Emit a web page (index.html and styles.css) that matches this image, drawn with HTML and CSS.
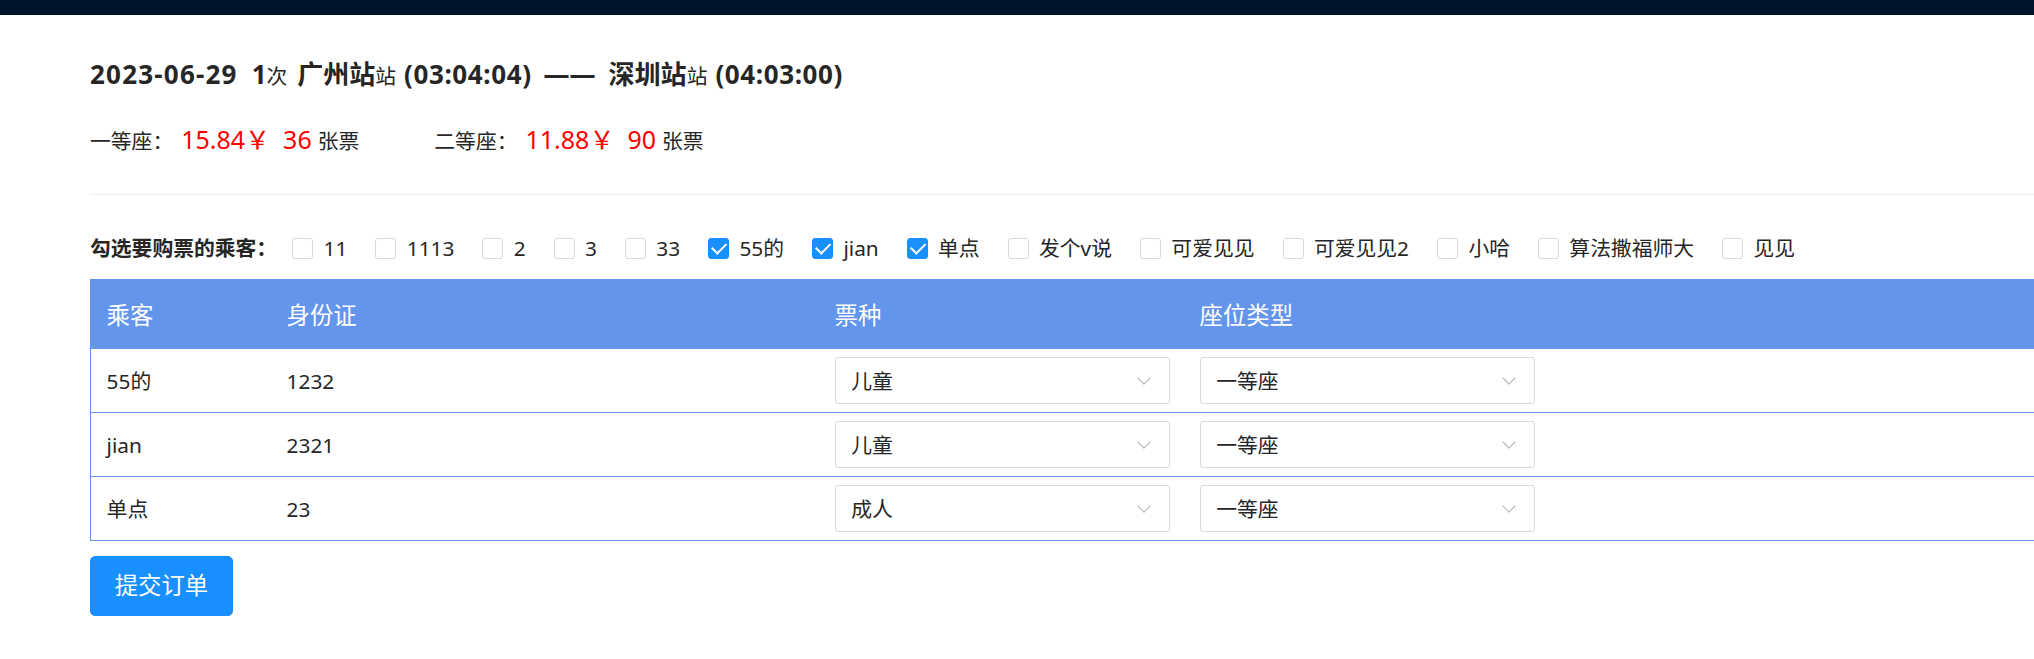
FILE: index.html
```html
<!DOCTYPE html>
<html lang="zh-CN">
<head>
<meta charset="utf-8">
<title>购票</title>
<link rel="stylesheet" href="styles.css">
</head>
<body>
<div class="topbar"></div>
<main class="page">
  <h1 class="title">
    <span class="date">2023-06-29</span>
    <span class="train">1<span class="unit">次</span></span>
    <span class="station">广州站<span class="unit">站</span></span>
    <span class="time">(03:04:04)</span>
    <span class="dash">——</span>
    <span class="station">深圳站<span class="unit">站</span></span>
    <span class="time">(04:03:00)</span>
  </h1>

  <div class="prices">
    <div class="price">
      <span class="seat">一等座：</span>
      <span class="money">15.84￥</span>
      <span class="count">36</span>
      <span class="tickets">张票</span>
    </div>
    <div class="price">
      <span class="seat">二等座：</span>
      <span class="money">11.88￥</span>
      <span class="count">90</span>
      <span class="tickets">张票</span>
    </div>
  </div>

  <div class="divider"></div>

  <div class="passengers">
    <span class="pick-label">勾选要购票的乘客：</span>
    <label class="check"><span class="box"></span><span class="check-text">11</span></label>
    <label class="check"><span class="box"></span><span class="check-text">1113</span></label>
    <label class="check"><span class="box"></span><span class="check-text">2</span></label>
    <label class="check"><span class="box"></span><span class="check-text">3</span></label>
    <label class="check"><span class="box"></span><span class="check-text">33</span></label>
    <label class="check"><span class="box on"></span><span class="check-text">55的</span></label>
    <label class="check"><span class="box on"></span><span class="check-text">jian</span></label>
    <label class="check"><span class="box on"></span><span class="check-text">单点</span></label>
    <label class="check"><span class="box"></span><span class="check-text">发个v说</span></label>
    <label class="check"><span class="box"></span><span class="check-text">可爱见见</span></label>
    <label class="check"><span class="box"></span><span class="check-text">可爱见见2</span></label>
    <label class="check"><span class="box"></span><span class="check-text">小哈</span></label>
    <label class="check"><span class="box"></span><span class="check-text">算法撒福师大</span></label>
    <label class="check"><span class="box"></span><span class="check-text">见见</span></label>
  </div>

  <table class="ticket-table">
    <colgroup>
      <col class="c-name">
      <col class="c-id">
      <col class="c-type">
      <col>
    </colgroup>
    <thead>
      <tr><th>乘客</th><th>身份证</th><th>票种</th><th>座位类型</th></tr>
    </thead>
    <tbody>
      <tr>
        <td>55的</td><td>1232</td>
        <td><div class="select"><span>儿童</span><svg class="chev" width="14" height="8" viewBox="0 0 14 8"><path d="M0.7 0.7 L7 7 L13.3 0.7" fill="none" stroke="#bfbfbf" stroke-width="1.3"/></svg></div></td>
        <td><div class="select"><span>一等座</span><svg class="chev" width="14" height="8" viewBox="0 0 14 8"><path d="M0.7 0.7 L7 7 L13.3 0.7" fill="none" stroke="#bfbfbf" stroke-width="1.3"/></svg></div></td>
      </tr>
      <tr>
        <td>jian</td><td>2321</td>
        <td><div class="select"><span>儿童</span><svg class="chev" width="14" height="8" viewBox="0 0 14 8"><path d="M0.7 0.7 L7 7 L13.3 0.7" fill="none" stroke="#bfbfbf" stroke-width="1.3"/></svg></div></td>
        <td><div class="select"><span>一等座</span><svg class="chev" width="14" height="8" viewBox="0 0 14 8"><path d="M0.7 0.7 L7 7 L13.3 0.7" fill="none" stroke="#bfbfbf" stroke-width="1.3"/></svg></div></td>
      </tr>
      <tr>
        <td>单点</td><td>23</td>
        <td><div class="select"><span>成人</span><svg class="chev" width="14" height="8" viewBox="0 0 14 8"><path d="M0.7 0.7 L7 7 L13.3 0.7" fill="none" stroke="#bfbfbf" stroke-width="1.3"/></svg></div></td>
        <td><div class="select"><span>一等座</span><svg class="chev" width="14" height="8" viewBox="0 0 14 8"><path d="M0.7 0.7 L7 7 L13.3 0.7" fill="none" stroke="#bfbfbf" stroke-width="1.3"/></svg></div></td>
      </tr>
    </tbody>
  </table>

  <button class="submit" type="button">提交订单</button>
</main>
</body>
</html>
```

FILE: styles.css
```css
* { box-sizing: border-box; }

html, body {
  margin: 0;
  padding: 0;
  background: #fff;
}

body {
  font-family: "Noto Sans", "Noto Sans CJK SC", sans-serif;
  color: #262626;
  overflow: hidden;
}

.topbar {
  height: 15px;
  background: #001529;
}

.page {
  padding-left: 90px;
}

/* title */
.title {
  margin: 41px 0 0;
  height: 36px;
  display: flex;
  align-items: baseline;
  font-size: 26px;
  line-height: 36px;
  font-weight: 700;
  white-space: nowrap;
}

.title .unit {
  font-size: 20.8px;
  font-weight: 400;
}

.date { letter-spacing: 1.2px; }
.train { margin-left: 14px; }
.station { margin-left: 10px; }
.time { margin-left: 8px; letter-spacing: 0.6px; }
.dash { margin-left: 12px; }
.dash + .station { margin-left: 13px; }

/* prices */
.prices {
  margin-top: 31px;
  height: 32px;
  display: flex;
  align-items: baseline;
  font-size: 20.8px;
  line-height: 32px;
  white-space: nowrap;
}

.price {
  display: flex;
  align-items: baseline;
}

.price + .price { margin-left: 75px; }

.money,
.count {
  color: #ff0000;
  font-size: 25px;
}

.money { margin-left: 8px; }
.count { margin-left: 13px; }
.tickets { margin-left: 6px; }

.divider {
  margin-top: 39px;
  height: 1px;
  background: #eeeeee;
}

/* passengers */
.passengers {
  margin-top: 37px;
  height: 32px;
  display: flex;
  align-items: center;
  font-size: 20.8px;
  line-height: 32px;
  white-space: nowrap;
}

.pick-label {
  font-weight: 700;
  margin-right: 15px;
}

.check {
  display: flex;
  align-items: center;
  margin-right: 17.6px;
}

.box {
  position: relative;
  width: 21px;
  height: 21px;
  border: 1px solid #d9d9d9;
  border-radius: 3px;
  background: #fff;
}

.box.on {
  background: #1890ff;
  border-color: #1890ff;
}

.box.on::after {
  content: "";
  position: absolute;
  top: 50%;
  left: 21.5%;
  width: 7.4px;
  height: 11.9px;
  border: 2.6px solid #fff;
  border-top: 0;
  border-left: 0;
  transform: rotate(45deg) translate(-50%, -50%);
}

.check-text {
  padding: 0 10.4px;
}

/* table */
.ticket-table {
  margin-top: 15px;
  width: 100%;
  table-layout: fixed;
  border-collapse: separate;
  border-spacing: 0;
  border-left: 1px solid #6495ed;
}

.c-name { width: 180px; }
.c-id { width: 548px; }
.c-type { width: 365px; }

.ticket-table th {
  height: 70px;
  padding: 0 15.6px;
  background: #6495ed;
  color: #fff;
  font-size: 23.4px;
  font-weight: 400;
  text-align: left;
}

.ticket-table td {
  padding: 8px 15.6px;
  border-bottom: 1px solid #6495ed;
  font-size: 20.8px;
  line-height: 28px;
  vertical-align: middle;
  white-space: nowrap;
}

.select {
  display: flex;
  align-items: center;
  justify-content: space-between;
  width: 335px;
  height: 47px;
  padding: 0 18px 0 15.6px;
  border: 1px solid #d9d9d9;
  border-radius: 3px;
  background: #fff;
}

.chev { display: block; }

/* button */
.submit {
  display: block;
  margin-top: 15px;
  height: 60px;
  padding: 0 23.7px;
  border: 1px solid #1890ff;
  border-radius: 5px;
  background: #1890ff;
  color: #fff;
  font-family: inherit;
  font-size: 23.4px;
  line-height: 1;
  box-shadow: 0 2px 0 rgba(0, 0, 0, 0.045);
}
```
